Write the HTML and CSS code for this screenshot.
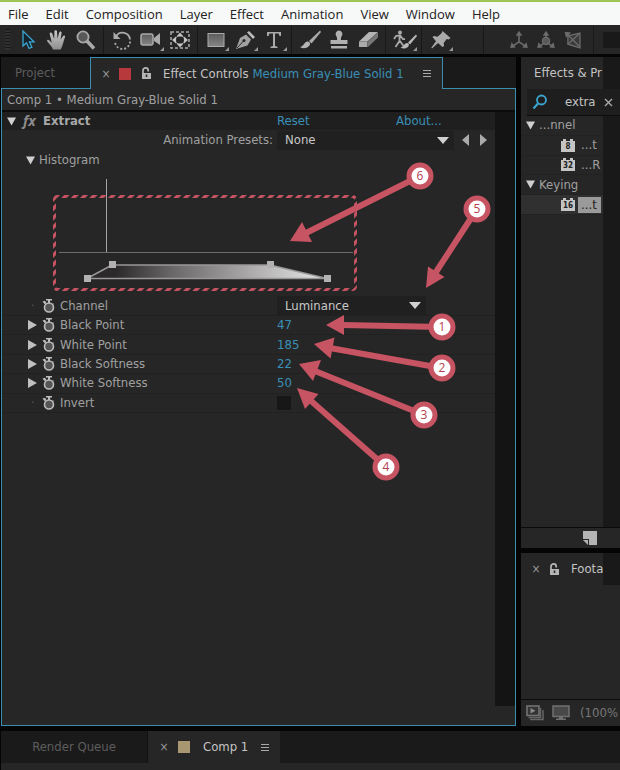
FILE: index.html
```
<!DOCTYPE html>
<html lang="en">
<head>
<meta charset="UTF-8" />
<meta name="viewport" content="width=device-width, initial-scale=1" />
<title>Effect Controls - Extract</title>
<link rel="stylesheet" href="styles.css">
</head>
<body>
<!-- shared gradients and small symbols -->
<svg class="defs" width="0" height="0" aria-hidden="true">
<defs>
<linearGradient id="metal" x1="0" y1="0" x2="0" y2="1"><stop offset="0" stop-color="#c9c9c9"/><stop offset="1" stop-color="#8e8e8e"/></linearGradient>
<linearGradient id="plate" x1="0" y1="0" x2="0" y2="1"><stop offset="0" stop-color="#5c5c5c"/><stop offset="1" stop-color="#858585"/></linearGradient>
<symbol id="watch" viewBox="0 0 13 14"><circle cx="7" cy="8.500" r="4.500" fill="#555" stroke="#bdbdbd" stroke-width="1.600"/><path d="M4 0h6v1.500H8V4H6V1.500H4zM.5 2.500l2.500-.8 1.500 2.300-1.800 1.300zM10.500 4l1.500 1-1 .8z" fill="#bdbdbd"/></symbol>
<symbol id="lock" viewBox="0 0 11 13"><path d="M2 6V3.500a2.600 2.600 0 0 1 5.200 0V4.500" fill="none" stroke="#b5b5b5" stroke-width="1.700"/><path d="M1 6h9v6H1z" fill="#b5b5b5"/><path d="M4.700 7.500h1.600v2.500H4.700z" fill="#262626"/></symbol>
<symbol id="brick" viewBox="0 0 14 13"><path d="M0 2h2V0h3v2h4V0h3v2h2v11H0z" fill="#c4c4c4"/></symbol>
</defs>
</svg>

<nav class="menubar" aria-label="Main menu">
<a href="#">File</a><a href="#">Edit</a><a href="#">Composition</a><a href="#">Layer</a><a href="#">Effect</a><a href="#">Animation</a><a href="#">View</a><a href="#">Window</a><a href="#">Help</a>
</nav>

<div class="toolbar" role="toolbar" aria-label="Tools">
<span class="grip"></span>
<button class="tool" aria-label="Selection"><svg viewBox="0 0 28 28"><path d="M9 5v15l3.500-3.200 2.600 5.700 2.800-1.300-2.500-5.400h4.600z" fill="#16232b" stroke="#3aa6d6" stroke-width="1.300"/></svg></button>
<button class="tool" aria-label="Hand"><svg viewBox="0 0 28 28"><path d="M10 23.500c-1-3-4-5.500-5.800-8.200-.6-1.500 1.200-2 2.200-.8l2.400 2.200L6.700 8c-.2-1.700 2-2.100 2.500-.5l2 5.600.2-7.600c.1-1.700 2.500-1.700 2.600 0l.5 7.200 1.700-6.200c.5-1.600 2.700-1.100 2.400.6l-1 6.500 2.400-3.600c.8-1.200 2.500-.4 2 .9-1.500 4-2.300 9-4.300 12.600z" fill="url(#metal)"/></svg></button>
<button class="tool" aria-label="Zoom"><svg viewBox="0 0 28 28"><path d="M14.500 14.500l7.500 8" stroke="#aaa" stroke-width="3.500"/><circle cx="11" cy="11" r="5.600" fill="#585858" stroke="#a8a8a8" stroke-width="1.800"/></svg></button>
<span class="divider"></span>
<button class="tool" aria-label="Rotation"><svg viewBox="0 0 28 28"><path d="M8 10.500a7.500 7.500 0 0 1 14 3" fill="none" stroke="#aaa" stroke-width="1.800"/><path d="M22 15.500a7.500 7.500 0 0 1-15 0" fill="none" stroke="#aaa" stroke-width="1.800" stroke-dasharray="2 2"/><path d="M5.500 6v7h7z" fill="#aaa"/></svg></button>
<button class="tool more" aria-label="Camera"><svg viewBox="0 0 28 28"><rect x="4" y="8" width="12" height="11" rx="2" fill="url(#plate)" stroke="#aaa" stroke-width="1.500"/><path d="M17 12l6-5v12l-6-4z" fill="#aaa"/></svg></button>
<button class="tool" aria-label="Pan behind"><svg viewBox="0 0 28 28"><rect x="5" y="6" width="18" height="16" fill="none" stroke="#aaa" stroke-width="1.500" stroke-dasharray="3 2"/><circle cx="14" cy="14" r="4.500" fill="none" stroke="#999" stroke-width="1"/><path d="M14 6.500l3.500 4h-7zM14 21.500l3.500-4h-7zM6 14l4-3.500v7zM22 14l-4-3.500v7z" fill="#c4c4c4"/></svg></button>
<span class="divider"></span>
<button class="tool more" aria-label="Rectangle"><svg viewBox="0 0 28 28"><rect x="6" y="7.500" width="16" height="13" fill="url(#plate)" stroke="#aaa"/></svg></button>
<button class="tool more" aria-label="Pen"><svg viewBox="0 0 28 28"><path d="M5 23l4-11 6-3.500 5 5-3.500 6z" fill="#a2a2a2"/><path d="M16 6.500l2-1.500 6 6-2 2z" fill="#bbb"/><path d="M6 22l6.500-7" stroke="#262626"/><circle cx="13" cy="14.500" r="1.500" fill="#262626"/></svg></button>
<button class="tool more" aria-label="Type"><svg viewBox="0 0 28 28"><path d="M7 6h14v4h-1.500l-1-2.500H15V20l2.500.8V22h-7v-1.200L13 20V7.500H9.500l-1 2.500H7z" fill="#aaa"/></svg></button>
<span class="divider"></span>
<button class="tool" aria-label="Brush"><svg viewBox="0 0 28 28"><path d="M24 4.500L13 15l2.500 2.500L25 6z" fill="#aaa"/><path d="M4 21c3 0 4-4.500 7-5.500 3-.5 4 3 2 4.500-2.500 2.500-6 3-9 1z" fill="#b4b4b4"/></svg></button>
<button class="tool" aria-label="Clone stamp"><svg viewBox="0 0 28 28"><path d="M14 4.500a3.500 3.500 0 0 1 2.800 5.500c-1 1.500-1 3-.8 4h6.500v4h-17v-4H12c.2-1 .2-2.500-.8-4A3.500 3.500 0 0 1 14 4.500zM6 20h16v2.500H6z" fill="#b0b0b0"/></svg></button>
<button class="tool" aria-label="Eraser"><svg viewBox="0 0 28 28"><path d="M5 15.500L15 6h9L13.500 15.500z" fill="#b4b4b4"/><path d="M5 15.500h8.500V21H5z" fill="#aaa"/><path d="M14 15.500L24 6v5.500L14 21z" fill="#777"/></svg></button>
<span class="divider"></span>
<button class="tool more" aria-label="Roto brush"><svg viewBox="0 0 28 28"><circle cx="10" cy="6.500" r="2" fill="#aaa"/><path d="M9.500 9v6l-4 6M10 15l3.500 5M4 13l2-3 4-.8 3 4h2" fill="none" stroke="#aaa" stroke-width="1.800"/><path d="M26 8.500l-8 8 2 2 7-8.500zM10.500 21.500c3-.5 3.500-4 6.500-4.500 2.500 0 2.500 3 .5 4.200-2 1.500-5 1.700-7 .3z" fill="#b8b8b8"/></svg></button>
<span class="divider"></span>
<button class="tool more" aria-label="Puppet pin"><svg viewBox="0 0 28 28"><path d="M16.500 5l8 7-1.800 1.500-2-.5-3 4 .3 3-1.600 1-4.400-4L6 22.500l-.7-.7 4.700-6.600L6.500 11l1.500-1 3.500.8 4-3.500z" fill="#aaa"/></svg></button>
<span class="divider wide"></span>
<button class="tool axis" aria-label="Local axis"><svg viewBox="0 0 28 28"><path d="M14 8v8L8 20M14 16l6 4" fill="none" stroke="#6c6c6c" stroke-width="1.700"/><path d="M14 4l3.500 5.500h-7zM4.500 22.500l1.500-6 4.500 5.500zM23.500 22.500l-1.500-6-4.500 5.500z" fill="#6c6c6c"/></svg></button>
<button class="tool axis" aria-label="World axis"><svg viewBox="0 0 28 28"><path d="M14 8v8L8 20M14 16l6 4" fill="none" stroke="#6c6c6c" stroke-width="1.700"/><path d="M14 4l3.500 5.500h-7zM4.500 22.500l1.500-6 4.500 5.500zM23.500 22.500l-1.500-6-4.500 5.500z" fill="#6c6c6c"/><circle cx="14" cy="15" r="4" fill="#5a5a5a" stroke="#777"/></svg></button>
<button class="tool axis" aria-label="View axis"><svg viewBox="0 0 28 28"><path d="M8.500 9.500l13-3v16l-13-4z" fill="#3a3a3a" stroke="#6c6c6c" stroke-width="1.400"/><path d="M8 8l13 13M20.500 7.500l-12 11" fill="none" stroke="#6c6c6c" stroke-width="1.400"/><path d="M5 5l7 1-5.500 5.500z" fill="#6c6c6c"/></svg></button>
<span class="divider end"></span>
<span class="toolfield"></span>
</div>

<div class="workspace">
<main class="controls">
<div class="tabs">
<button class="tab">Project</button>
<div class="tab active">
<button class="close" aria-label="Close Effect Controls">×</button>
<span class="swatch red"></span>
<svg class="lock"><use href="#lock"/></svg>
<span class="tabname">Effect Controls <span class="blue">Medium Gray-Blue Solid 1</span></span>
<button class="burger" aria-label="Panel menu"><i></i><i></i><i></i></button>
</div>
<span class="tabfill"></span>
</div>
<section class="panel">
<div class="crumb">Comp 1 • Medium Gray-Blue Solid 1</div>
<div class="scroller">
<div class="effect">
<div class="effecthead">
<svg class="down" viewBox="0 0 10 9"><path d="M0 0h10L5 9z"/></svg>
<em class="fx">fx</em>
<h1>Extract</h1>
<a class="col" href="#">Reset</a>
<a class="about" href="#">About...</a>
</div>
<div class="presets">
<label for="preset">Animation Presets:</label>
<span class="picker presetpicker"><select id="preset"><option>None</option></select><svg viewBox="0 0 12 7"><path d="M0 0h12L6 7z"/></svg></span>
<button aria-label="Previous preset"><svg viewBox="0 0 7 12"><path d="M7 0v12L0 6z"/></svg></button>
<button aria-label="Next preset"><svg viewBox="0 0 7 12"><path d="M0 0v12l7-6z"/></svg></button>
</div>
<div class="histhead"><svg class="down" viewBox="0 0 10 9"><path d="M0 0h10L5 9z"/></svg>Histogram</div>
<svg class="graph" width="306" height="126" viewBox="0 0 306 126" role="img" aria-label="Histogram">
<defs>
<linearGradient id="ramp"><stop offset=".12" stop-color="#2c292a"/><stop offset=".35" stop-color="#696667"/><stop offset=".75" stop-color="#bab8b9"/><stop offset="1" stop-color="#e8e8e8"/></linearGradient>
<pattern id="hatch" width="6.600" height="6.600" patternUnits="userSpaceOnUse" patternTransform="rotate(45)"><rect width="3.600" height="6.600" fill="#c75462"/></pattern>
</defs>
<path d="M54.500 9v73" stroke="#a5a5a5"/>
<path d="M7 82.500h294" stroke="#6d6d6d"/>
<path d="M35 108.500L60 95h158l57 13.500z" fill="url(#ramp)" stroke="#999" stroke-width="1.500"/>
<path d="M32 105h7v7h-7zM57 91h7v7h-7zM215 91h7v7h-7zM272 105h7v7h-7z" fill="#b2b2b2"/>
<rect x="2.500" y="26.500" width="301" height="93" rx="3" fill="none" stroke="url(#hatch)" stroke-width="3"/>
</svg>
<div class="params">
<div class="param"><span class="dot">·</span><svg class="watch"><use href="#watch"/></svg><label for="channel">Channel</label>
<span class="picker"><select id="channel"><option>Luminance</option></select><svg viewBox="0 0 12 7"><path d="M0 0h12L6 7z"/></svg></span></div>
<div class="param"><svg class="right" viewBox="0 0 9 10"><path d="M0 0v10l9-5z"/></svg><svg class="watch"><use href="#watch"/></svg><label for="bp">Black Point</label><input id="bp" type="text" value="47"></div>
<div class="param"><svg class="right" viewBox="0 0 9 10"><path d="M0 0v10l9-5z"/></svg><svg class="watch"><use href="#watch"/></svg><label for="wp">White Point</label><input id="wp" type="text" value="185"></div>
<div class="param"><svg class="right" viewBox="0 0 9 10"><path d="M0 0v10l9-5z"/></svg><svg class="watch"><use href="#watch"/></svg><label for="bs">Black Softness</label><input id="bs" type="text" value="22"></div>
<div class="param"><svg class="right" viewBox="0 0 9 10"><path d="M0 0v10l9-5z"/></svg><svg class="watch"><use href="#watch"/></svg><label for="ws">White Softness</label><input id="ws" type="text" value="50"></div>
<div class="param"><span class="dot">·</span><svg class="watch"><use href="#watch"/></svg><label for="invert">Invert</label><input id="invert" type="checkbox"></div>
</div>
</div>
<div class="scrollbar"></div>
</div>
</section>
</main>

<aside class="side">
<section class="presetpanel">
<div class="sidetab"><h2>Effects &amp; Pr</h2><span class="shade"></span></div>
<div class="search">
<svg viewBox="0 0 16 16"><circle cx="9.500" cy="6" r="4.500" fill="none" stroke="#3aa6d0" stroke-width="1.800"/><path d="M6 9.500L1.500 14.500" stroke="#3aa6d0" stroke-width="2.200"/></svg>
<input type="text" value="extra" aria-label="Search effects">
<button aria-label="Clear search"><svg viewBox="0 0 9 9"><path d="M1 1l7 7M8 1L1 8" stroke="#aaa" stroke-width="1.400"/></svg></button>
</div>
<div class="tree">
<ul>
<li class="folder"><svg class="down" viewBox="0 0 10 9"><path d="M0 0h10L5 9z"/></svg>...nnel</li>
<li><span class="brick"><svg><use href="#brick"/></svg><b>8</b></span><span>...t</span></li>
<li><span class="brick"><svg><use href="#brick"/></svg><b>32</b></span><span>...R</span></li>
<li class="folder"><svg class="down" viewBox="0 0 10 9"><path d="M0 0h10L5 9z"/></svg>Keying</li>
<li class="picked"><span class="brick"><svg><use href="#brick"/></svg><b>16</b></span><span>...t</span></li>
</ul>
<div class="shade"></div>
</div>
<div class="sidefoot"><button aria-label="New preset"><svg viewBox="0 0 14 14"><path d="M0 0h14v14H6V8H0z" fill="#b4b4b4"/><path d="M0 9h5v5z" fill="#b4b4b4"/></svg></button></div>
</section>
<section class="footage">
<div class="sidetab">
<button class="close" aria-label="Close Footage">×</button>
<svg class="lock"><use href="#lock"/></svg>
<h2>Foota</h2><span class="shade"></span>
</div>
<div class="viewbar">
<svg viewBox="0 0 18 16"><path d="M4 14.500h13V5M2.500 12.500h12V3" fill="none" stroke="#666" stroke-width="1.500"/><rect x="1" y="1" width="12" height="9.500" fill="#333" stroke="#777" stroke-width="1.500"/><path d="M4.500 3v5.500l5-2.700z" fill="#888"/></svg>
<svg viewBox="0 0 18 16"><rect x="1" y="1" width="16" height="10.500" fill="#484848" stroke="#707070" stroke-width="1.500"/><path d="M7 12h4v1.500h3V15H4v-1.500h3z" fill="#707070"/></svg>
<span>(100%</span>
</div>
</section>
</aside>
</div>

<footer class="timeline">
<button class="queue">Render Queue</button>
<div class="comp">
<button class="close" aria-label="Close Comp 1">×</button>
<span class="swatch tan"></span>
<span class="tabname">Comp 1</span>
<button class="burger" aria-label="Timeline menu"><i></i><i></i><i></i></button>
</div>
</footer>

<!-- numbered callouts drawn over the panel -->
<svg class="callouts" width="620" height="770">
<g class="arrows">
<path d="M326 325l18-10v20z"/>
<path d="M314 344l20.500-6.500-4 21z"/>
<path d="M299 364l22-4-8 21z"/>
<path d="M297 388l21.500 6-13.500 15z"/>
<path d="M426 288l2-21.500 16.500 10.500z"/>
<path d="M290 241l12-19 10 20z"/>
</g>
<g class="shafts">
<path d="M442 327L342 325"/><path d="M441 368L330 348"/><path d="M424 415L315 371"/><path d="M386 467L310 400"/><path d="M477 209L436 272"/><path d="M420 176L306 233"/>
</g>
<g class="pins">
<circle cx="442" cy="327" r="11"/><circle cx="442" cy="368" r="11"/><circle cx="424" cy="415" r="11"/><circle cx="386" cy="467" r="11"/><circle cx="477" cy="209" r="11"/><circle cx="420" cy="176" r="11"/>
</g>
<g class="nums">
<text x="442" y="331">1</text><text x="442" y="372">2</text><text x="424" y="419">3</text><text x="386" y="471">4</text><text x="477" y="213">5</text><text x="420" y="180">6</text>
</g>
</svg>
</body>
</html>
```

FILE: styles.css
```
:root {
--bg: #262626;
--dark: #1a1a1a;
--text: #a0a0a0;
--blue: #3a8fb7;
--edge: #3a8fb0;
--pin: #c75462;
}
* {
box-sizing: border-box;
}
body {
margin: 0;
min-height: 100vh;
display: flex;
flex-direction: column;
background: #050505;
color: var(--text);
font: 13px/18px "DejaVu Sans Condensed", "Noto Sans", Tahoma, sans-serif;
overflow-x: hidden;
position: relative;
}
.defs {
position: absolute;
}
button {
background: none;
border: 0;
padding: 0;
font: inherit;
color: inherit;
display: flex;
align-items: center;
justify-content: center;
}
a {
color: var(--blue);
text-decoration: none;
}
h1, h2 {
margin: 0;
font-size: 13px;
font-weight: 400;
}
svg {
flex: none;
}
/* menu and tools */
.menubar {
height: 25px;
border-top: 2px solid #9cc552;
background: #f7f8f8;
display: flex;
align-items: center;
gap: 17px;
padding-left: 8px;
}
.menubar a {
color: #222;
font-family: "Open Sans", sans-serif;
font-size: 13px;
}
.toolbar {
height: 29px;
background: var(--bg);
display: flex;
align-items: center;
padding-left: 5px;
}
.grip {
width: 5px;
height: 21px;
margin-right: 3px;
background: repeating-linear-gradient(#181818 0 1px, #303030 1px 3px);
}
.tool {
width: 29px;
height: 28px;
flex: none;
position: relative;
}
.tool svg {
width: 28px;
height: 28px;
}
.tool.axis {
width: 27px;
}
.tool.axis svg {
width: 26px;
height: 26px;
}
.more::after {
content: "";
position: absolute;
right: 1px;
bottom: 3px;
border: 2px solid transparent;
border-right-color: #999;
border-bottom-color: #999;
}
.divider {
width: 1px;
height: 28px;
margin: 0 3px;
background: #181818;
flex: none;
}
.divider.wide {
margin: 0 21px 0 29px;
}
.divider.end {
margin: 0 9px 0 7px;
}
.toolfield {
flex: 1;
height: 16px;
background: #191919;
}
/* workspace */
.workspace {
flex: 1;
display: grid;
grid-template-columns: minmax(0, 1fr) 99px;
gap: 5px;
padding: 3px 0 5px 1px;
}
.controls {
display: flex;
flex-direction: column;
}
.tabs {
display: flex;
height: 32px;
margin-bottom: -1px;
}
.tab {
width: 89px;
padding-right: 21px;
background: var(--dark);
color: #5d5d5d;
}
.tab.active {
position: relative;
display: flex;
align-items: center;
width: 353px;
padding: 0 11px;
background: var(--bg);
border: 1px solid var(--edge);
border-bottom: 0;
}
.tabfill {
flex: 1;
background: var(--dark);
}
.close {
width: 8px;
color: #999;
font-size: 12px;
}
.swatch {
width: 12px;
height: 12px;
}
.red {
background: #b8393b;
margin: 0 10px 0 9px;
}
.tan {
background: #a99772;
margin: 0 13px 0 10px;
}
.lock {
width: 11px;
height: 13px;
margin-right: 11px;
}
.tabname {
color: #c4c4c4;
white-space: nowrap;
}
.blue {
color: var(--blue);
}
.burger {
flex-direction: column;
gap: 2px;
margin-left: auto;
}
.burger i {
width: 8px;
height: 1px;
background: #aaa;
}
.panel {
flex: 1;
display: flex;
flex-direction: column;
background: var(--bg);
border: 1px solid var(--edge);
padding-bottom: 19px;
}
.crumb {
height: 23px;
line-height: 22px;
padding-left: 5px;
border-bottom: 2px solid #0b0b0b;
}
.scroller {
flex: 1;
display: flex;
}
.effect {
flex: 1;
}
.scrollbar {
width: 20px;
background: #141414;
}
.effecthead {
height: 18px;
display: flex;
align-items: center;
background: #1f1f1f;
padding-left: 5px;
}
.down {
width: 9px;
height: 9px;
fill: #cfcfcf;
}
.fx {
width: 20px;
padding-left: 7px;
margin-right: 7px;
font: italic 700 14px/16px "Noto Sans", sans-serif;
color: #8b8b8b;
}
.effecthead h1 {
font-weight: 700;
color: #a8a8a8;
flex: 0 0 234px;
}
.effecthead .col {
flex: 0 0 119px;
}
.presets {
height: 20px;
display: flex;
align-items: center;
}
.presets label {
width: 275px;
padding-right: 4px;
text-align: right;
}
.picker {
display: flex;
align-items: center;
width: 149px;
height: 19px;
background: #202020;
position: relative;
}
.presetpicker {
width: 177px;
margin-right: 7px;
}
.picker svg {
position: absolute;
right: 5px;
width: 12px;
height: 7px;
fill: #d0d0d0;
pointer-events: none;
}
select {
appearance: none;
width: 100%;
height: 18px;
border: 0;
padding: 0 0 0 8px;
background: transparent;
color: #c8c8c8;
font: inherit;
}
.presets button {
width: 9px;
}
.presets button + button {
margin-left: 9px;
}
.presets button svg {
width: 7px;
height: 12px;
fill: #aaa;
}
.histhead {
height: 20px;
display: flex;
align-items: center;
gap: 4px;
padding-left: 24px;
}
.graph {
display: block;
margin-left: 50px;
}
.params {
height: 117px;
display: grid;
grid-auto-rows: 1fr;
}
.param {
display: flex;
align-items: center;
padding-left: 26px;
border-bottom: 1px solid #212121;
}
.param label {
width: 217px;
}
.dot, .right {
width: 9px;
text-align: center;
color: #555;
}
.right {
height: 10px;
fill: #c0c0c0;
}
.watch {
width: 13px;
height: 14px;
margin: 0 5px 0 5px;
}
.param input[type="text"] {
width: 50px;
height: 18px;
border: 0;
padding: 0;
background: transparent;
color: var(--blue);
font: inherit;
}
.param input[type="checkbox"] {
appearance: none;
width: 14px;
height: 14px;
margin: 0;
background: #171717;
}
/* right column */
.side {
display: flex;
flex-direction: column;
gap: 5px;
min-width: 0;
}
.presetpanel {
flex: 0 0 491px;
display: flex;
flex-direction: column;
background: var(--bg);
}
.sidetab {
height: 32px;
display: flex;
align-items: center;
padding-left: 13px;
}
.sidetab h2 {
flex: 1;
min-width: 0;
white-space: nowrap;
color: #c4c4c4;
}
.shade {
width: 17px;
align-self: stretch;
background: #191919;
flex: none;
}
.search {
height: 27px;
display: flex;
align-items: center;
margin-left: 6px;
padding-left: 5px;
background: #1e1e1e;
border-bottom: 1px solid #0c0c0c;
}
.search > svg {
width: 16px;
height: 16px;
}
.search input {
flex: 1;
min-width: 0;
border: 0;
padding: 0 0 0 17px;
background: transparent;
color: #c4c4c4;
font: inherit;
}
.search button {
width: 9px;
margin-right: 7px;
}
.search button svg {
width: 9px;
height: 9px;
}
.tree {
flex: 1;
display: flex;
}
.tree ul {
flex: 1;
height: 99px;
display: grid;
grid-auto-rows: 1fr;
margin: 0;
padding: 0;
list-style: none;
}
.tree li {
display: flex;
align-items: center;
gap: 6px;
padding-left: 40px;
border-bottom: 1px solid #222;
}
.tree li.folder {
gap: 4px;
padding-left: 5px;
}
.brick {
display: grid;
width: 14px;
height: 13px;
}
.brick svg, .brick b {
grid-area: 1 / 1;
width: 14px;
height: 13px;
}
.brick b {
font-size: 8px;
line-height: 15px;
text-align: center;
color: #222;
}
.tree .picked {
gap: 3px;
background: #303030;
}
.picked span:last-child {
background: #9a9a9a;
color: #222;
line-height: 16px;
padding: 0 4px 0 3px;
}
.sidefoot {
height: 21px;
display: flex;
align-items: center;
padding-left: 62px;
border-top: 1px solid #0a0a0a;
}
.sidefoot svg {
width: 14px;
height: 14px;
}
.footage {
flex: 1;
display: flex;
flex-direction: column;
justify-content: space-between;
background: var(--bg);
}
.footage .sidetab {
padding-left: 11px;
}
.footage .close {
margin-right: 9px;
}
.viewbar {
height: 27px;
display: flex;
align-items: center;
gap: 8px;
padding-left: 5px;
border-top: 1px solid #0c0c0c;
color: #777;
}
.viewbar svg {
width: 18px;
height: 16px;
}
.viewbar span {
flex: none;
padding-left: 2px;
}
/* timeline */
.timeline {
height: 39px;
margin-left: 1px;
display: flex;
background: var(--dark);
border-bottom: 7px solid var(--bg);
}
.queue {
width: 147px;
color: #5d5d5d;
border-right: 1px solid #111;
}
.comp {
width: 132px;
display: flex;
align-items: center;
padding: 0 11px 0 12px;
background: var(--bg);
}
/* callouts */
.callouts {
position: absolute;
left: 0;
top: 0;
pointer-events: none;
}
.shafts {
stroke: var(--pin);
stroke-width: 6px;
}
.arrows {
fill: var(--pin);
}
.pins {
fill: #fff;
stroke: var(--pin);
stroke-width: 5px;
}
.nums {
fill: #b5404f;
font: 12px "Open Sans", sans-serif;
text-anchor: middle;
}
```
